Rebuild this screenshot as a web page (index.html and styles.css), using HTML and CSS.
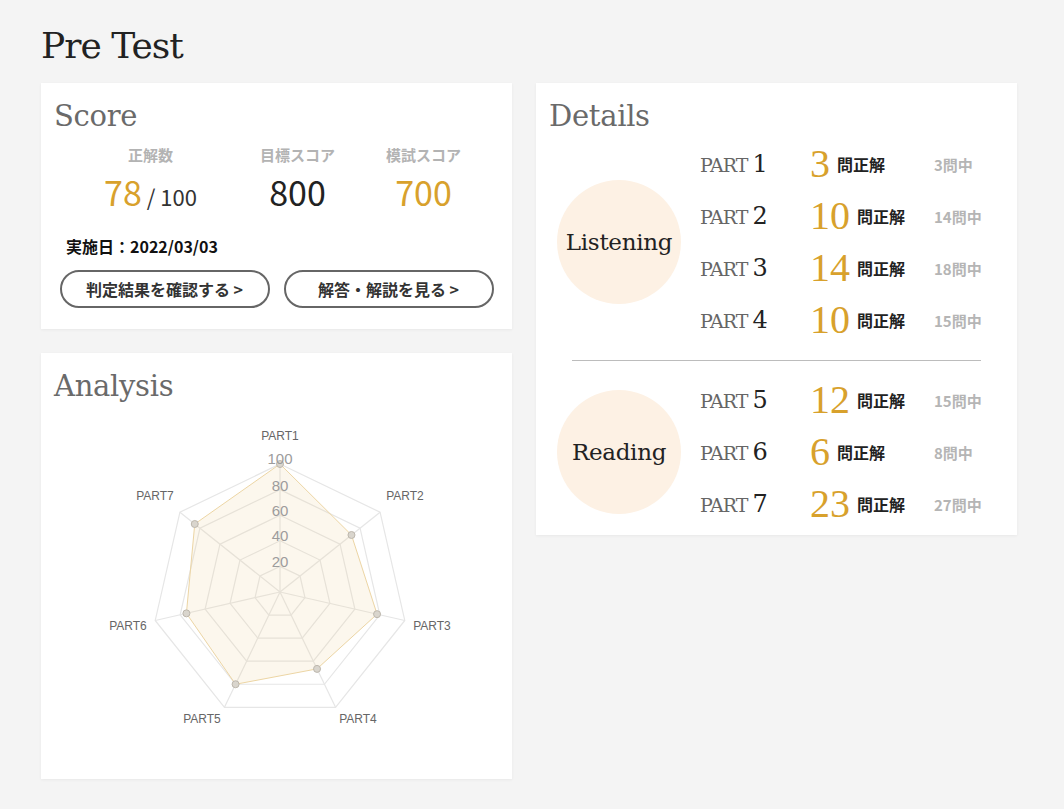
FILE: index.html
```html
<!DOCTYPE html>
<html lang="ja">
<head>
  <meta charset="UTF-8">
  <title>Pre Test - Result</title>
  <link rel="stylesheet" href="styles.css">
</head>
<body>
  <div class="page">
    <h1 class="page-title">Pre Test</h1>

    <div class="layout">
      <div class="col-left">
        <section class="card score-card">
          <h2 class="card-title">Score</h2>
          <div class="score-cols">
            <div class="score-col col-wide">
              <div class="score-label">正解数</div>
              <div class="score-value gold">78<span class="score-of"> / 100</span></div>
            </div>
            <div class="score-col">
              <div class="score-label">目標スコア</div>
              <div class="score-value">800</div>
            </div>
            <div class="score-col">
              <div class="score-label">模試スコア</div>
              <div class="score-value gold">700</div>
            </div>
          </div>
          <p class="test-date">実施日：2022/03/03</p>
          <div class="btn-row">
            <a href="#" class="btn">判定結果を確認する &gt;</a>
            <a href="#" class="btn">解答・解説を見る &gt;</a>
          </div>
        </section>

        <section class="card analysis-card">
          <h2 class="card-title">Analysis</h2>
          <svg class="radar" width="471" height="366" viewBox="0 0 471 366">
            <!-- grid rings: 20 / 40 / 60 / 80 / 100 -->
            <g class="radar-grid">
              <polygon points="239,163.4 259.01,173.04 263.96,194.7 250.11,212.07 227.89,212.07 214.04,194.7 218.99,173.04"/>
              <polygon points="239,137.8 279.03,157.08 288.92,200.39 261.21,235.13 216.79,235.13 189.08,200.39 198.97,157.08"/>
              <polygon points="239,112.2 299.04,141.12 313.87,206.09 272.32,258.19 205.68,258.19 164.13,206.09 178.96,141.12"/>
              <polygon points="239,86.6 319.06,125.15 338.83,211.79 283.43,281.26 194.57,281.26 139.17,211.79 158.94,125.15"/>
              <polygon points="239,61 339.07,109.19 363.79,217.48 294.54,304.32 183.46,304.32 114.21,217.48 138.93,109.19"/>
              <line x1="239" y1="189" x2="239" y2="61"/>
              <line x1="239" y1="189" x2="339.07" y2="109.19"/>
              <line x1="239" y1="189" x2="363.79" y2="217.48"/>
              <line x1="239" y1="189" x2="294.54" y2="304.32"/>
              <line x1="239" y1="189" x2="183.46" y2="304.32"/>
              <line x1="239" y1="189" x2="114.21" y2="217.48"/>
              <line x1="239" y1="189" x2="138.93" y2="109.19"/>
            </g>

            <polygon class="radar-area" points="239,61 310.48,131.99 336.06,211.15 276.02,265.88 194.57,281.26 145.41,210.36 153.75,121.01"/>
            <g class="radar-dots">
              <circle cx="239" cy="61" r="3.5"/>
              <circle cx="310.48" cy="131.99" r="3.5"/>
              <circle cx="336.06" cy="211.15" r="3.5"/>
              <circle cx="276.02" cy="265.88" r="3.5"/>
              <circle cx="194.57" cy="281.26" r="3.5"/>
              <circle cx="145.41" cy="210.36" r="3.5"/>
              <circle cx="153.75" cy="121.01" r="3.5"/>
            </g>

            <g class="radar-ticks">
              <text x="239" y="57">100</text>
              <text x="239" y="84">80</text>
              <text x="239" y="109">60</text>
              <text x="239" y="134">40</text>
              <text x="239" y="160">20</text>
            </g>
            <g class="radar-labels">
              <text x="239" y="34">PART1</text>
              <text x="364" y="94">PART2</text>
              <text x="391" y="224">PART3</text>
              <text x="317" y="317">PART4</text>
              <text x="161" y="317">PART5</text>
              <text x="87" y="224">PART6</text>
              <text x="114" y="94">PART7</text>
            </g>
          </svg>
        </section>
      </div>

      <section class="card details-card">
        <h2 class="card-title">Details</h2>

        <div class="section-group">
          <div class="section-badge">Listening</div>
          <div class="part-list">
            <div class="part-row">
              <div class="part-name">PART <span class="part-num">1</span></div>
              <div class="part-correct"><span class="count">3</span><span class="count-label">問正解</span></div>
              <div class="part-total">3問中</div>
            </div>
            <div class="part-row">
              <div class="part-name">PART <span class="part-num">2</span></div>
              <div class="part-correct"><span class="count">10</span><span class="count-label">問正解</span></div>
              <div class="part-total">14問中</div>
            </div>
            <div class="part-row">
              <div class="part-name">PART <span class="part-num">3</span></div>
              <div class="part-correct"><span class="count">14</span><span class="count-label">問正解</span></div>
              <div class="part-total">18問中</div>
            </div>
            <div class="part-row">
              <div class="part-name">PART <span class="part-num">4</span></div>
              <div class="part-correct"><span class="count">10</span><span class="count-label">問正解</span></div>
              <div class="part-total">15問中</div>
            </div>
          </div>
        </div>

        <hr class="divider">

        <div class="section-group reading">
          <div class="section-badge">Reading</div>
          <div class="part-list">
            <div class="part-row">
              <div class="part-name">PART <span class="part-num">5</span></div>
              <div class="part-correct"><span class="count">12</span><span class="count-label">問正解</span></div>
              <div class="part-total">15問中</div>
            </div>
            <div class="part-row">
              <div class="part-name">PART <span class="part-num">6</span></div>
              <div class="part-correct"><span class="count">6</span><span class="count-label">問正解</span></div>
              <div class="part-total">8問中</div>
            </div>
            <div class="part-row">
              <div class="part-name">PART <span class="part-num">7</span></div>
              <div class="part-correct"><span class="count">23</span><span class="count-label">問正解</span></div>
              <div class="part-total">27問中</div>
            </div>
          </div>
        </div>
      </section>
    </div>
  </div>
</body>
</html>
```

FILE: styles.css
```css
body {
  margin: 0;
  background: #f4f4f4;
  font-family: "Noto Sans CJK JP", "Noto Sans", sans-serif;
  color: #222;
}
.page {
  padding: 25px 41px;
}
.page-title {
  margin: 0 0 16px;
  font-family: "DejaVu Serif", serif;
  font-weight: normal;
  font-size: 36px;
  line-height: 42px;
  letter-spacing: -1px;
  color: #222;
}
.layout {
  display: grid;
  grid-template-columns: 471px 481px;
  gap: 24px;
  align-items: start;
}
.col-left {
  display: flex;
  flex-direction: column;
  gap: 24px;
}
.card {
  background: white;
  padding: 16px 13px 0;
  box-shadow: 0 1px 3px rgba(0,0,0,0.05);
}
.card-title {
  margin: 0;
  font-family: "DejaVu Serif", serif;
  font-weight: normal;
  font-size: 29px;
  line-height: 34px;
  letter-spacing: -0.3px;
  color: #6a6a6a;
}

/* score */
.score-card {
  padding-bottom: 21px;
}
.score-cols {
  display: flex;
  justify-content: center;
  gap: 51px;
  margin-top: 12px;
  text-align: center;
}
.col-wide {
  width: 117px;
}
.score-label {
  font-size: 15px;
  line-height: 20px;
  font-weight: bold;
  color: #b3b3b3;
}
.score-value {
  margin-top: 7px;
  height: 40px;
  font-size: 34px;
  line-height: 40px;
  color: #222;
  white-space: nowrap;
}
.gold {
  color: #d8a12c;
}
.score-of {
  font-size: 22px;
  line-height: 20px;
  color: #333;
}
.test-date {
  margin: 23px 0 0 12px;
  height: 22px;
  font-size: 16px;
  line-height: 22px;
  font-weight: bold;
  color: #111;
}
.btn-row {
  display: flex;
  justify-content: center;
  gap: 14px;
  margin-top: 13px;
}
.btn {
  box-sizing: border-box;
  width: 210px;
  height: 38px;
  border: 2px solid #666;
  border-radius: 19px;
  display: flex;
  align-items: center;
  justify-content: center;
  font-size: 16px;
  font-weight: bold;
  color: #333;
  text-decoration: none;
}

/* analysis */
.analysis-card {
  padding-bottom: 10px;
}
.radar {
  display: block;
  margin: 0 -13px;
}
.radar-grid polygon,
.radar-grid line {
  fill: none;
  stroke: #e6e6e6;
  stroke-width: 1.2;
}
.radar-area {
  fill: rgba(236, 204, 140, 0.16);
  stroke: #ecd5a4;
  stroke-width: 1;
}
.radar-dots circle {
  fill: #d9d5cd;
  stroke: #bdb7ad;
  stroke-width: 1;
}
.radar-ticks text {
  font-family: "Liberation Sans", Arial, sans-serif;
  font-size: 15px;
  fill: #9c9c9c;
  text-anchor: middle;
  dominant-baseline: middle;
}
.radar-labels text {
  font-family: "Liberation Sans", Arial, sans-serif;
  font-size: 12px;
  fill: #666;
  text-anchor: middle;
  dominant-baseline: middle;
}

/* details */
.details-card {
  padding-bottom: 5px;
}
.section-group {
  display: flex;
  align-items: center;
  margin-top: 5px;
}
.section-group.reading {
  margin-top: 0;
}
.section-badge {
  width: 124px;
  height: 124px;
  border-radius: 50%;
  background: #fdf1e4;
  margin: 0 19px 0 8px;
  display: flex;
  align-items: center;
  justify-content: center;
  font-family: "DejaVu Serif", serif;
  font-size: 23px;
  letter-spacing: -0.3px;
  color: #222;
}
.part-row {
  display: flex;
  align-items: center;
  height: 52px;
}
.part-name {
  width: 110px;
  font-family: "DejaVu Serif", serif;
  font-size: 19px;
  letter-spacing: -1px;
  color: #666;
}
.part-num {
  font-size: 24px;
  letter-spacing: 0;
  color: #222;
}
.part-correct {
  width: 124px;
  display: flex;
  align-items: center;
  gap: 7px;
}
.count {
  font-family: "Liberation Serif", serif;
  font-size: 40px;
  line-height: 1;
  color: #d8a12c;
}
.count-label {
  font-size: 16px;
  font-weight: bold;
  color: #222;
}
.part-total {
  font-size: 15px;
  font-weight: bold;
  color: #b5b5b5;
}
.divider {
  border: none;
  border-top: 1px solid #bcbcbc;
  margin: 14px 23px 13px;
}
```
